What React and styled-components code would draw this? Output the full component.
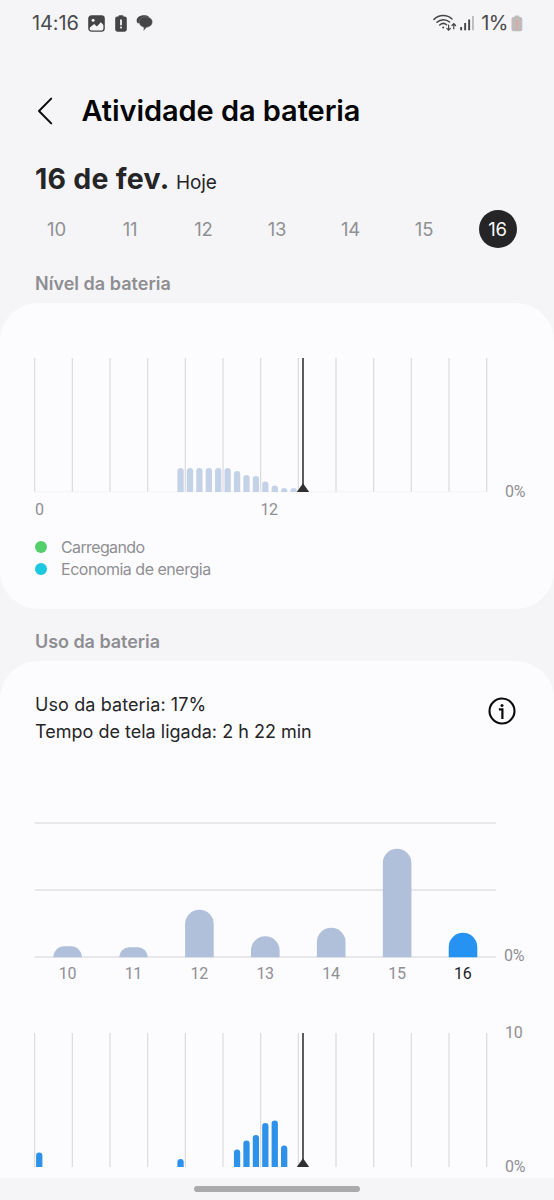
import React from "react";
import styled, { createGlobalStyle } from "styled-components";

const days = [10, 11, 12, 13, 14, 15, 16];
const today = 16;

// heights in px, one slot = 30 minutes
const levelBars = [24, 24, 24, 24, 24, 24, 21, 17, 16, 10.5, 6.5, 4, 4].map(
  (height, i) => ({ slot: 15 + i, height })
);

const hourlyBars = [
  { slot: 0, height: 14.5 },
  { slot: 15, height: 8 },
  { slot: 21, height: 17.5 },
  { slot: 22, height: 26.5 },
  { slot: 23, height: 32 },
  { slot: 24, height: 44 },
  { slot: 25, height: 46.5 },
  { slot: 26, height: 21.5 },
];

const dailyBars = [11, 10, 47.5, 21, 29.5, 108.5, 24.5];

const roundedTop = (x, bottom, width, height) => {
  const rx = width / 2;
  const ry = Math.min(rx, height);
  const top = bottom - height;
  return `M${x} ${bottom}V${top + ry}A${rx} ${ry} 0 0 1 ${x + width} ${
    top + ry
  }V${bottom}Z`;
};

const flatTop = (x, bottom, width, height) => {
  const r = Math.min(width / 2, height);
  const top = bottom - height;
  return `M${x} ${bottom}A${r} ${r} 0 0 1 ${x + r} ${top}H${
    x + width - r
  }A${r} ${r} 0 0 1 ${x + width} ${bottom}Z`;
};

const TimeChart = ({ bars, color, baseline }) => (
  <svg width="462" height="136" viewBox="0 0 462 136">
    {Array.from({ length: 13 }, (_, i) => (
      <rect
        key={i}
        x={(i * 37.67).toFixed(2)}
        y="0"
        width="1.3"
        height="134"
        fill="#dddde0"
      />
    ))}
    {baseline && <rect y="133.5" width="453" height="0.8" fill="#f0f0f2" />}
    {bars.map(({ slot, height }) => (
      <path
        key={slot}
        d={roundedTop(2.1 + slot * 9.42, 134, 6.3, height)}
        fill={color}
      />
    ))}
    <rect x="268" y="0" width="2" height="134" fill="#5c5c5e" />
    <path d="M269 125.2L275.2 134H262.8Z" fill="#303032" />
  </svg>
);

const DailyChart = () => (
  <svg width="462" height="136" viewBox="0 0 462 136">
    {[0.3, 67.3, 134.3].map((y) => (
      <rect key={y} x="0.5" y={y} width="461.5" height="1.4" fill="#e0e0e4" />
    ))}
    {dailyBars.map((height, i) => {
      const draw = height < 14 ? flatTop : roundedTop;
      return (
        <path
          key={i}
          d={draw(19.3 + i * 65.9, 135.3, 28.6, height)}
          fill={days[i] === today ? "#2693f3" : "#b0bfda"}
        />
      );
    })}
  </svg>
);

const PictureIcon = () => (
  <svg width="17" height="17" viewBox="0 0 17 17">
    <rect x="0.9" y="0.9" width="15.2" height="15.2" rx="2.6" fill="none" stroke="#454547" strokeWidth="1.4" />
    <path d="M1 3a2 2 0 0 1 2-2h11a2 2 0 0 1 2 2v7.6l-3.2-3.4-3.9 4.3-2.8-2.6L1 13.2Z" fill="#454547" />
    <circle cx="5.1" cy="5.2" r="1.5" fill="#f5f5f8" />
  </svg>
);

const BatteryAlertIcon = () => (
  <svg width="12" height="17" viewBox="0 0 12 17">
    <path d="M3.6 1.6V1a.8.8 0 0 1 .8-.8h3.2a.8.8 0 0 1 .8.8v.6h1.3A2.1 2.1 0 0 1 11.8 3.7v10.9a2.1 2.1 0 0 1-2.1 2.1H2.3A2.1 2.1 0 0 1 .2 14.6V3.7A2.1 2.1 0 0 1 2.3 1.6Z" fill="#454547" />
    <rect x="5.1" y="4.5" width="1.8" height="5.8" fill="#f5f5f8" />
    <rect x="5.1" y="11.6" width="1.8" height="1.8" fill="#f5f5f8" />
  </svg>
);

const ChatIcon = () => (
  <svg width="17" height="16" viewBox="0 0 17 16">
    <path d="M1.9 8.6C.1 6.9.2 3.9 2.4 2.1 5-.1 10.300-.2 13 1.800L7 6Z" fill="#454547" />
    <path d="M9.800 1.800c3.800 0 6.500 2.200 6.500 5.200 0 3-2.500 5-6 5.400L7.800 15.500V12.200C5 11.500 3.100 9.700 3.100 7c0-3 2.900-5.200 6.700-5.200Z" fill="#454547" stroke="#8e8e91" strokeWidth="0.400" />
  </svg>
);

const WifiIcon = () => (
  <svg width="24" height="18" viewBox="0 0 24 18" fill="none" stroke="#454547" strokeLinecap="round">
    <path d="M1 5.400C6.200.4 14 .4 19 5" strokeWidth="1.500" />
    <path d="M3.900 8.300C7.500 4.800 13 4.800 16.600 8" strokeWidth="1.500" />
    <path d="M6.700 11C9 9 11.600 9 13.600 10.700" strokeWidth="1.500" />
    <circle cx="10.200" cy="13.400" r="1" fill="#454547" stroke="none" />
    <path d="M15.600 11V16M13.800 14.300l1.800 1.800 1.800-1.800M20.800 14.800V9.800M19 11.500l1.800-1.800 1.800 1.800" strokeWidth="1.200" />
  </svg>
);

const SignalIcon = () => (
  <svg width="15" height="16" viewBox="0 0 15 16">
    <rect x="0.2" y="12" width="1.9" height="3.3" fill="#454547" />
    <rect x="4.2" y="8" width="1.9" height="7.3" fill="#454547" />
    <rect x="8.2" y="4.5" width="1.9" height="10.8" fill="#454547" />
    <rect x="12" y="1" width="1.9" height="14.3" fill="#bcbcbf" />
  </svg>
);

const LowBatteryIcon = () => (
  <svg width="12" height="17" viewBox="0 0 12 17">
    <path d="M3.5 2V1.2a.8.8 0 0 1 .8-.8h3.200a.8.8 0 0 1 .8.8V2h1A2 2 0 0 1 11.300 4v10.300a2 2 0 0 1-2 2H2.500a2 2 0 0 1-2-2V4a2 2 0 0 1 2-2Z" fill="#bfbbba" />
    <path d="M5 5h1.900v6H5ZM5 12.200h1.900v1.800H5Z" fill="#e3a596" />
  </svg>
);

const BackIcon = () => (
  <svg width="16" height="28" viewBox="0 0 16 28">
    <path d="M14.2 1.6L2 14l12.2 12.4" fill="none" stroke="#0a0a0a" strokeWidth="2" strokeLinecap="round" strokeLinejoin="round" />
  </svg>
);

const InfoIcon = () => (
  <svg width="28" height="28" viewBox="0 0 28 28">
    <circle cx="14" cy="14" r="12.5" fill="none" stroke="#0a0a0a" strokeWidth="2.1" />
    <circle cx="14" cy="8.4" r="1.5" fill="#0a0a0a" />
    <path d="M10.9 12.400H14.400V22" fill="none" stroke="#0a0a0a" strokeWidth="2.200" />
  </svg>
);

const App = () => {
  return (
    <Screen>
      <GlobalStyle />
      <StatusBar>
        <Clock>14:16</Clock>
        <Notifications>
          <PictureIcon />
          <BatteryAlertIcon />
          <ChatIcon />
        </Notifications>
        <System>
          <WifiIcon />
          <SignalIcon />
          <Percent>1%</Percent>
          <LowBatteryIcon />
        </System>
      </StatusBar>
      <Header>
        <BackIcon />
        <Title>Atividade da bateria</Title>
      </Header>
      <DateHeading>
        <DateText>16 de fev.</DateText>
        <TodayText>Hoje</TodayText>
      </DateHeading>
      <DayPicker>
        {days.map((day) => (
          <Day key={day} $active={day === today}>
            {day}
          </Day>
        ))}
      </DayPicker>

      <SectionTitle>Nível da bateria</SectionTitle>
      <LevelCard>
        <ChartRow>
          <TimeChart bars={levelBars} color="#c3d2e7" baseline />
          <Scale>
            <span>0%</span>
          </Scale>
        </ChartRow>
        <Hours>
          <span>0</span>
          <span>12</span>
        </Hours>
        <Legend>
          <LegendItem $color="#55cf6b" $spacing="-0.62px">
            Carregando
          </LegendItem>
          <LegendItem $color="#1bc8e0" $spacing="-0.49px">
            Economia de energia
          </LegendItem>
        </Legend>
      </LevelCard>

      <SectionTitle $gap="12.5px" $spacing="-0.05px">
        Uso da bateria
      </SectionTitle>
      <UsageCard>
        <Summary>
          <div>
            <SummaryLine $spacing="0.1px">Uso da bateria: 17%</SummaryLine>
            <SummaryLine>Tempo de tela ligada: 2 h 22 min</SummaryLine>
          </div>
          <InfoIcon />
        </Summary>
        <ChartRow $narrow>
          <DailyChart />
          <Scale>
            <span>0%</span>
          </Scale>
        </ChartRow>
        <DayLabels>
          {days.map((day) => (
            <DayLabel key={day} $active={day === today}>
              {day}
            </DayLabel>
          ))}
        </DayLabels>
        <ChartRow>
          <TimeChart bars={hourlyBars} color="#2e92ea" />
          <Scale>
            <span>10</span>
            <span>0%</span>
          </Scale>
        </ChartRow>
      </UsageCard>
      <NavBar>
        <Handle />
      </NavBar>
    </Screen>
  );
};

const GlobalStyle = createGlobalStyle`
  * {
    box-sizing: border-box;
    margin: 0;
  }
  body {
    background: #f5f5f8;
    overflow: hidden;
  }
  svg {
    display: block;
    flex-shrink: 0;
  }
`;

const Screen = styled.main`
  width: 554px;
  height: 1200px;
  display: flex;
  flex-direction: column;
  overflow: hidden;
  background: #f5f5f8;
  font-family: Inter, "Liberation Sans", sans-serif;
`;

const StatusBar = styled.div`
  height: 46px;
  padding: 0 31px 0 32px;
  display: flex;
  align-items: center;
  color: #4a4a4c;
  font-size: 20px;
`;

const Clock = styled.span`
  width: 56px;
  letter-spacing: -0.1px;
`;

const Notifications = styled.div`
  display: flex;
  align-items: center;
  gap: 9.5px;
`;

const System = styled.div`
  margin-left: auto;
  display: flex;
  align-items: center;
  gap: 3px;
`;

const Percent = styled.span`
  margin-left: 3px;
  letter-spacing: -0.5px;
`;

const Header = styled.header`
  height: 94px;
  padding: 35px 37px 0;
  display: flex;
  align-items: center;
  gap: 28.5px;
`;

const Title = styled.h1`
  padding-top: 1px;
  font-size: 29px;
  font-weight: 600;
  line-height: 40px;
  letter-spacing: -0.07px;
  white-space: nowrap;
  color: #050505;
`;

const DateHeading = styled.div`
  height: 56px;
  padding: 21px 35px 0;
  display: flex;
  align-items: baseline;
  gap: 6.5px;
  line-height: 36px;
  color: #252527;
`;

const DateText = styled.h2`
  font-size: 28.5px;
  font-weight: 700;
  letter-spacing: 0.25px;
`;

const TodayText = styled.span`
  font-size: 19px;
  letter-spacing: -0.1px;
`;

const DayPicker = styled.div`
  height: 68px;
  padding: 13.8px 19.75px 0;
  display: grid;
  grid-template-columns: repeat(7, 73.5px);
  justify-items: center;
`;

const Day = styled.span`
  width: 38px;
  height: 38px;
  border-radius: 50%;
  text-align: center;
  line-height: 38px;
  font-size: 18.5px;
  letter-spacing: -0.2px;
  color: ${({ $active }) => ($active ? "#fafafa" : "#909093")};
  background: ${({ $active }) => ($active ? "#252527" : "transparent")};
`;

const SectionTitle = styled.h3`
  padding: ${({ $gap }) => $gap || 0} 35px 0;
  font-size: 18px;
  font-weight: 600;
  line-height: 39px;
  letter-spacing: ${({ $spacing }) => $spacing || "0.02px"};
  color: #8e8e92;
`;

const Card = styled.section`
  background: #fcfcfe;
  padding: 0 34px;
`;

const LevelCard = styled(Card)`
  height: 306px;
  padding-top: 55px;
  border-radius: 38px;
`;

const UsageCard = styled(Card)`
  height: 517px;
  padding-top: 30px;
  border-radius: 38px 38px 0 0;
`;

const ChartRow = styled.div`
  height: 134px;
  display: flex;
  gap: ${({ $narrow }) => ($narrow ? "8px" : "9px")};
`;

const Scale = styled.div`
  height: 154px;
  margin-top: -10px;
  display: flex;
  flex-direction: column;
  justify-content: space-between;
  font-family: Roboto, sans-serif;
  font-size: 16px;
  line-height: 20px;
  letter-spacing: -0.2px;
  color: #8f8f93;
  span:last-child {
    margin-top: auto;
  }
`;

const Hours = styled.div`
  padding: 8px 0 0 1px;
  display: grid;
  grid-template-columns: 225.5px 1fr;
  font-family: Roboto, sans-serif;
  font-size: 16px;
  line-height: 20px;
  letter-spacing: -0.4px;
  color: #8f8f93;
`;

const Legend = styled.div`
  padding-top: 16px;
`;

const LegendItem = styled.p`
  display: flex;
  align-items: center;
  gap: 14px;
  font-size: 16px;
  line-height: 22px;
  letter-spacing: ${({ $spacing }) => $spacing};
  color: #8f8f93;
  &::before {
    content: "";
    width: 12px;
    height: 12px;
    margin-left: 1px;
    border-radius: 50%;
    background: ${({ $color }) => $color};
  }
`;

const Summary = styled.div`
  height: 131px;
  display: flex;
  justify-content: space-between;
  padding: 0 4px 0 1px;
  svg {
    margin-top: 6px;
  }
`;

const SummaryLine = styled.p`
  font-size: 18px;
  line-height: 27px;
  letter-spacing: ${({ $spacing }) => $spacing || "0.01px"};
  color: #252527;
`;

const DayLabels = styled.div`
  height: 77.5px;
  padding: 8px 0 0 0.5px;
  display: grid;
  grid-template-columns: repeat(7, 65.9px);
  font-family: Roboto, sans-serif;
  font-size: 16px;
  line-height: 20px;
  text-align: center;
`;

const DayLabel = styled.span`
  letter-spacing: -0.3px;
  color: ${({ $active }) => ($active ? "#1c1c1e" : "#8f8f93")};
`;

const NavBar = styled.footer`
  height: 22px;
  padding-top: 8.5px;
  background: #f5f5f7;
`;

const Handle = styled.div`
  width: 166px;
  height: 6px;
  margin: 0 auto;
  border-radius: 3px;
  background: #aaaaac;
`;

export default App;
